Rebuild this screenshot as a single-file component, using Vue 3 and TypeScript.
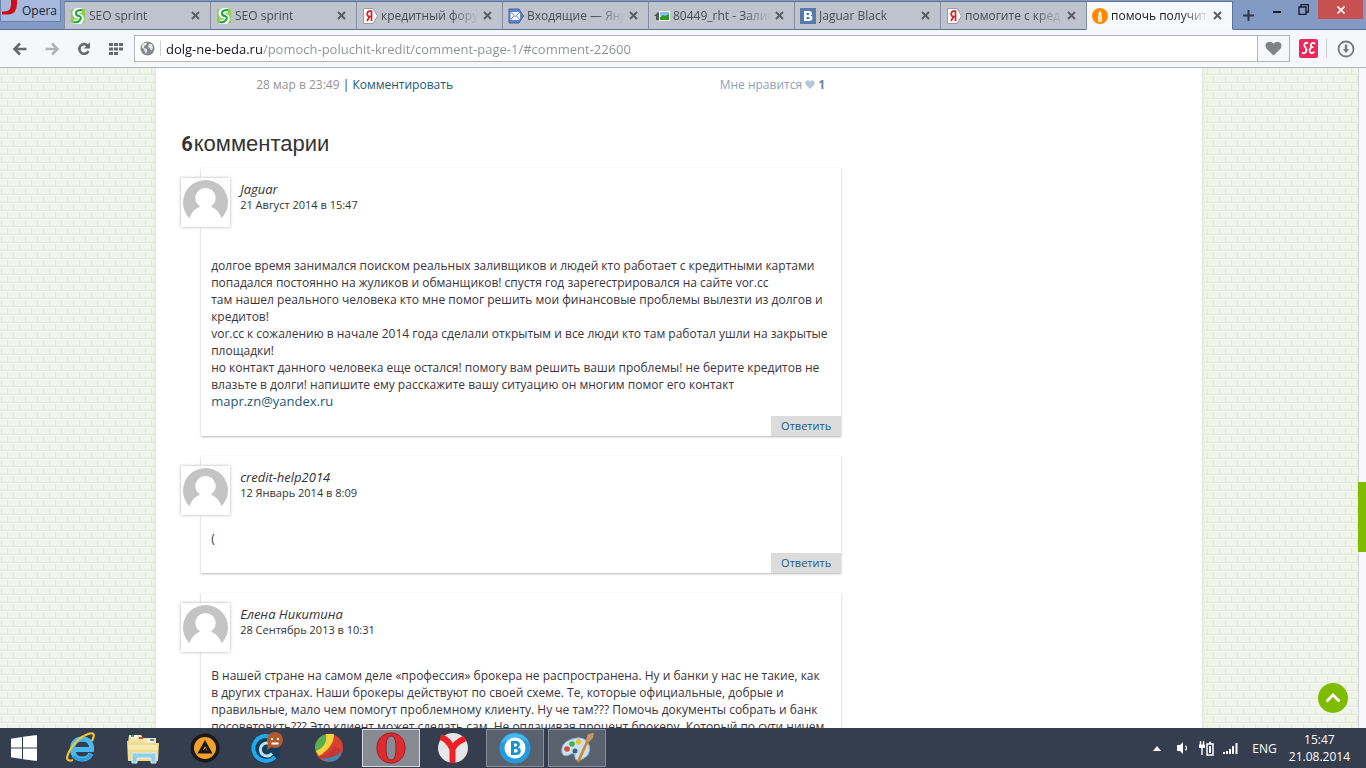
<script setup lang="ts">
import { ref } from 'vue'

type TabIcon = 'seo' | 'yandex' | 'mail' | 'pic' | 'vk' | 'flame'
interface Tab { icon: TabIcon; title: string }
interface Comment { author: string; date: string; spaced?: boolean; lines: string[]; email?: string }

const tabs: Tab[] = [
  { icon: 'seo', title: 'SEO sprint' },
  { icon: 'seo', title: 'SEO sprint' },
  { icon: 'yandex', title: 'кредитный фору' },
  { icon: 'mail', title: 'Входящие — Янд' },
  { icon: 'pic', title: '80449_rht - Залив' },
  { icon: 'vk', title: 'Jaguar Black' },
  { icon: 'yandex', title: 'помогите с кред' },
  { icon: 'flame', title: 'помочь получит' },
]
const activeTab = ref(7)
const address = ref('dolg-ne-beda.ru/pomoch-poluchit-kredit/comment-page-1/#comment-22600')

const comments: Comment[] = [
  {
    author: 'Jaguar',
    date: '21 Август 2014 в 15:47',
    spaced: true,
    lines: [
      'долгое время занимался поиском реальных заливщиков и людей кто работает с кредитными картами',
      'попадался постоянно на жуликов и обманщиков! спустя год зарегестрировался на сайте vor.cc',
      'там нашел реального человека кто мне помог решить мои финансовые проблемы вылезти из долгов и',
      'кредитов!',
      'vor.cc к сожалению в начале 2014 года сделали открытым и все люди кто там работал ушли на закрытые',
      'площадки!',
      'но контакт данного человека еще остался! помогу вам решить ваши проблемы! не берите кредитов не',
      'влазьте в долги! напишите ему расскажите вашу ситуацию он многим помог его контакт',
    ],
    email: 'mapr.zn@yandex.ru',
  },
  { author: 'credit-help2014', date: '12 Январь 2014 в 8:09', lines: ['('] },
  {
    author: 'Елена Никитина',
    date: '28 Сентябрь 2013 в 10:31',
    lines: [
      'В нашей стране на самом деле «профессия» брокера не распространена. Ну и банки у нас не такие, как',
      'в других странах. Наши брокеры действуют по своей схеме. Те, которые официальные, добрые и',
      'правильные, мало чем помогут проблемному клиенту. Ну че там??? Помочь документы собрать и банк',
      'посоветовкть??? Это клиент может сделать сам. Не оплачивая процент брокеру. Который по сути ничем',
    ],
  },
]
</script>

<template>
  <div class="screen">
    <header class="tabbar">
      <button class="menu" type="button">
        <svg width="18" height="16" viewBox="0 0 18 16" aria-hidden="true"><path d="M10 0h6v4q0 10-9 10.500H1v-3q9 1 9-7z" fill="#cc0f16" /></svg>
        Opera
      </button>
      <nav class="tabs">
        <div v-for="(tab, i) in tabs" :key="i" class="tab" :class="{ active: i === activeTab }">
          <button class="tab-main" type="button" @click="activeTab = i">
            <svg v-if="tab.icon === 'seo'" class="fav" viewBox="0 0 16 16" aria-hidden="true"><rect x="1" y="1" width="14" height="14" fill="#8fcf4f" /><path d="M12 2Q5 2 5 5t4 3q3 1 2 4t-7 2" stroke="#fff" stroke-width="5" fill="none" /><path d="M12 2Q6 2 6 5t3 3q3 1 1 4t-6 2" stroke="#18a048" stroke-width="2" fill="none" /></svg>
            <svg v-else-if="tab.icon === 'yandex'" class="fav" viewBox="0 0 16 16" aria-hidden="true"><path d="M1.500.500H11L15.500 8 11 15.500H1.500z" fill="#fff" stroke="#9a9ba3" /><path d="M9.500 13V3.200H7.800Q5.200 3.500 5.200 6t2.600 2.500h1.700M7.700 8.500 5 13" stroke="#d8212b" stroke-width="1.700" fill="none" /></svg>
            <svg v-else-if="tab.icon === 'mail'" class="fav" viewBox="0 0 16 16" aria-hidden="true"><path d="M1 1h10l4.500 7L11 15H1z" fill="#5f84c9" stroke="#46619f" /><path d="M2.500 4h9.500v8H2.500z" fill="#fff" /><path d="m2.500 4 4.700 4.500L12 4M2.500 12l3.300-4M12 12 8.500 8" stroke="#5f84c9" fill="none" /></svg>
            <svg v-else-if="tab.icon === 'pic'" class="fav" viewBox="0 0 16 16" aria-hidden="true"><path d="M0 8 4 4l3 3v5H2V8z" fill="#53575a" /><path d="M5 3h11v10H5z" fill="#f4f6f6" /><path d="M6 4h9v4H6z" fill="#89bfe8" /><path d="M6 12V9l3-2 2 1 4-2v6z" fill="#319a25" /></svg>
            <svg v-else-if="tab.icon === 'vk'" class="fav" viewBox="0 0 16 16" aria-hidden="true"><rect width="16" height="16" fill="#547cab" /><path fill-rule="evenodd" d="M4 3h5q3 0 3 2.500Q12 7 10.500 7.600 12.500 8 12.500 10 12.500 13 9 13H4zM6.500 5v2h1.700Q9.400 7 9.400 6T8.200 5zM6.500 9v2h2q1.300 0 1.300-1t-1.300-1z" fill="#fff" /></svg>
            <svg v-else class="fav" viewBox="0 0 16 16" aria-hidden="true"><circle cx="8" cy="8" r="8" fill="#ff8a00" /><path d="M8 2Q10 6 10 10l-.5 4h-3L6 10Q6 6 8 2z" fill="#fff" /><path d="M8 6v7" stroke="#ffb860" /></svg>
            <span class="tab-title">{{ tab.title }}</span>
          </button>
          <button class="close" type="button" aria-label="Закрыть вкладку"><svg width="9" height="9" viewBox="0 0 9 9" aria-hidden="true"><path d="m1 1 7 7M8 1 1 8" stroke="#5c5e64" stroke-width="2" /></svg></button>
        </div>
      </nav>
      <button class="newtab" type="button" aria-label="Новая вкладка"><svg width="11" height="11" viewBox="0 0 11 11" aria-hidden="true"><path d="M5.500 0v11M0 5.500h11" stroke="#2c3950" stroke-width="2" /></svg></button>
      <div class="winctl">
        <button type="button" aria-label="Свернуть"><svg width="10" height="10" viewBox="0 0 10 10" aria-hidden="true"><path d="M1 7h8" stroke="#1b1f28" stroke-width="2" /></svg></button>
        <button type="button" aria-label="Развернуть"><svg width="11" height="11" viewBox="0 0 11 11" aria-hidden="true"><path d="M3 2.500V.500h7.500V8h-2M1 3h7v7.500H1z" stroke="#1b1f28" stroke-width="1.400" fill="none" /></svg></button>
        <button class="quit" type="button" aria-label="Закрыть"><svg width="8" height="8" viewBox="0 0 8 8" aria-hidden="true"><path d="m.500.500 7 7M7.500.500l-7 7" stroke="#fff" stroke-width="1.600" /></svg></button>
      </div>
    </header>

    <div class="toolbar">
      <button class="tool" type="button" aria-label="Назад"><svg width="16" height="14" viewBox="0 0 16 14" aria-hidden="true"><path d="M8 1.500 2.500 7 8 12.500M3 7h11.500" stroke="#666a6e" stroke-width="2.600" fill="none" /></svg></button>
      <button class="tool" type="button" aria-label="Вперёд"><svg width="16" height="14" viewBox="0 0 16 14" aria-hidden="true"><path d="M8 1.500 13.500 7 8 12.500M13 7H1.500" stroke="#b0b2b5" stroke-width="2.600" fill="none" /></svg></button>
      <button class="tool" type="button" aria-label="Обновить"><svg width="14" height="14" viewBox="0 0 14 14" aria-hidden="true"><path d="M10.500 3.500A4.800 4.800 0 1 0 11.500 9" stroke="#666a6e" stroke-width="2.600" fill="none" /><path d="M13 0v6.500H6.800z" fill="#666a6e" /></svg></button>
      <button class="tool" type="button" aria-label="Экспресс-панель"><svg width="15" height="12" viewBox="0 0 15 12" aria-hidden="true"><path d="M0 1.500h15M0 6h15M0 10.500h10" stroke="#666a6e" stroke-width="3" stroke-dasharray="4 1" /></svg></button>
      <div class="addr">
        <svg class="globe" width="15" height="15" viewBox="0 0 15 15" aria-hidden="true"><circle cx="7.500" cy="7.500" r="7" fill="#85888c" /><path d="M2 4q2-3 5-2L6 4 4 5v2l3 1v2l-1 3Q4 10 4 8L2 7zM9 3l3 0 1 4-2 3-1-3-2-1z" fill="#e7e8ea" /></svg>
        <input v-model="address" class="url" type="text" aria-label="Адрес" spellcheck="false">
        <button class="heart" type="button" aria-label="В закладки"><svg width="17" height="15" viewBox="0 0 17 15" aria-hidden="true"><path d="M8.500 14.500 1.700 8Q-.500 5 1.200 2.300 4-1 8.500 2.500 13-1 15.800 2.300 17.500 5 15.300 8z" fill="#808285" /></svg></button>
      </div>
      <button class="ext" type="button" aria-label="SEO sprint"><svg width="19" height="19" viewBox="0 0 19 19" aria-hidden="true"><rect width="19" height="19" rx="2" fill="#e9285c" /><path d="M9 4.500Q7.500 3 5.800 4.500 4.500 6.500 6.500 8.500q2 2.500 0 5-2 1.500-3.500 0M16 5q-1.500-2-3.500-.5-1.500 2 0 3.700h2-2q-2.800 2-1.500 5 2 2 4.500-.5" stroke="#fff" stroke-width="1.700" fill="none" /></svg></button>
      <button class="dl" type="button" aria-label="Загрузки"><svg width="18" height="18" viewBox="0 0 18 18" aria-hidden="true"><circle cx="9" cy="9" r="7.500" stroke="#77797c" stroke-width="1.800" fill="none" /><path d="M9 4.500v6" stroke="#77797c" stroke-width="2.400" /><path d="M5.800 9h6.400L9 13z" fill="#77797c" /></svg></button>
    </div>

    <div class="view">
      <div class="bricks">
        <main class="page">
          <div class="meta">
            <p><span class="when">28 мар в 23:49</span> | <a href="#comment">Комментировать</a></p>
            <a class="like" href="#like">Мне нравится <svg width="10" height="9" viewBox="0 0 10 9" aria-hidden="true"><path d="M5 9 1 5Q-.500 3 1 1q2-1.700 4 .5 2-2.200 4-.5 1.500 2 0 4z" fill="#b5c8d8" /></svg> <b>1</b></a>
          </div>
          <h2><span class="count">6</span> комментарии</h2>
          <article v-for="c in comments" :key="c.author" class="card">
            <div class="head">
              <div class="avatar"><svg width="45" height="45" viewBox="0 0 45 45" aria-hidden="true"><circle cx="22.500" cy="22.500" r="22.500" fill="#c4c4c4" /><path d="M22.500 8a10 10 0 0 1 5.500 18.500Q36 30 39.500 40v5h-34v-5Q9 30 17 26.500A10 10 0 0 1 22.500 8z" fill="#fff" /></svg></div>
              <div>
                <cite>{{ c.author }}</cite>
                <time>{{ c.date }}</time>
              </div>
            </div>
            <p class="body" :class="{ spaced: c.spaced }">
              <template v-for="(line, i) in c.lines" :key="i"><br v-if="i > 0">{{ line }}</template>
              <template v-if="c.email"><br><a :href="'mailto:' + c.email">{{ c.email }}</a></template>
            </p>
            <a class="reply" href="#reply">Ответить</a>
          </article>
        </main>
      </div>
      <div class="scroll"><div class="thumb"></div></div>
      <button class="up" type="button" aria-label="Наверх"><svg width="16" height="10" viewBox="0 0 16 10" aria-hidden="true"><path d="m1.500 8.500 6.500-6.500 6.500 6.500" stroke="#fff" stroke-width="2.800" fill="none" /></svg></button>
    </div>

    <footer class="taskbar">
      <button class="start" type="button" aria-label="Пуск"><svg width="26" height="26" viewBox="0 0 26 26" aria-hidden="true"><path d="M0 3.800 11 2v10.500H0zM12 1.800 26 0v12.500H12zM0 13.500h11V24L0 22.200zM12 13.500h14V26l-14-1.800z" fill="#fff" /></svg></button>
      <button class="app" type="button" aria-label="Internet Explorer">
        <svg width="32" height="32" viewBox="0 0 32 32" aria-hidden="true"><path d="M8 17.500h18.500Q27 7 17 7 8 7.500 7.500 17q.5 10 10 10 6 0 8.500-5.500" stroke="#4cb9ee" stroke-width="5" fill="none" /><path d="M9 24q3 4 9 3.500 6-.5 8-6" stroke="#2c9fe0" stroke-width="3" fill="none" /><path d="M27 9Q32-1 23 2 12 6 5 18-2 31 8 28" stroke="#f4c531" stroke-width="2.200" fill="none" /></svg>
      </button>
      <button class="app" type="button" aria-label="Проводник">
        <svg width="34" height="32" viewBox="0 0 34 32" aria-hidden="true"><path d="M3 3h12l2 3h13v6H2z" fill="#f5e6ad" /><path d="M5 3h6v3H5zM22 7h6v3h-6z" fill="#fff" /><path d="M5 3h3v2H5z" fill="#28a838" /><path d="M13 5h4v2h-4z" fill="#d6452b" /><path d="M24 7h4v2h-4z" fill="#3e92ce" /><path d="M1 9h10l2 2h20l-1 18H2z" fill="#efdc8d" /><path d="M2 13h30v5H2z" fill="#f7e9ad" /><path d="M6 31V21h24v10h-5v-5H11v5z" fill="#90cde9" stroke="#d8f2fc" /></svg>
      </button>
      <button class="app" type="button" aria-label="AIMP">
        <svg width="30" height="30" viewBox="0 0 30 30" aria-hidden="true"><circle cx="15" cy="15" r="14.500" fill="#17191c" /><circle cx="15" cy="15" r="11" fill="#f6a12a" /><path d="m15 10 5 9H10z" stroke="#191a1c" stroke-width="3" fill="#e8992a" /><path d="m10 19 6-4 1 4z" fill="#191a1c" /></svg>
      </button>
      <button class="app" type="button" aria-label="Комета">
        <svg width="32" height="32" viewBox="0 0 32 32" aria-hidden="true"><circle cx="15" cy="17" r="14.500" fill="#143c5b" /><path d="M24 25A12.500 12.500 0 1 1 20 5" stroke="#20a9ed" stroke-width="4" fill="none" /><path d="M21 21.500a6.500 6.500 0 1 1-1-9" stroke="#b7e4fa" stroke-width="3" fill="none" /><circle cx="24" cy="8" r="8" fill="#b45a2c" /><path d="m17 11-1 7 6-4z" fill="#b45a2c" /><path d="M20 7h2M26 7h2M20.500 11.500h7" stroke="#fff" stroke-width="2" /></svg>
      </button>
      <button class="app" type="button" aria-label="Шар">
        <svg width="30" height="30" viewBox="0 0 30 30" aria-hidden="true"><circle cx="15" cy="15" r="14" fill="#d94134" /><path d="M15 1A14 14 0 0 0 1 15l3 8q7-8 13-12z" fill="#58ad4f" /><path d="M12 1h8q0 13-15 22l-3-5Q14 13 12 1z" fill="#f5d33d" /><path d="m29 15-5 11q-8 5-17 0 15 0 22-11z" fill="#318fb8" /><path d="M5 23q10 0 15-10l8 4Q20 27 7 25z" fill="#c93735" /></svg>
      </button>
      <button class="app current" type="button" aria-label="Opera">
        <svg width="30" height="32" viewBox="0 0 30 32" aria-hidden="true"><path fill-rule="evenodd" d="M15 1C24 1 29 8 29 16s-5 15-14 15S1 24 1 16 6 1 15 1zm0 3c-4 0-5 5-5 12s1 12 5 12 5-5 5-12S19 4 15 4z" fill="#de2b2f" stroke="#9d1a20" /></svg>
      </button>
      <button class="app" type="button" aria-label="Яндекс Браузер">
        <svg width="32" height="32" viewBox="0 0 32 32" aria-hidden="true"><circle cx="16" cy="16" r="15" fill="#e5e6e7" /><path d="M3.500 5Q11 7 15.500 17M28 6.500Q19 10 15.500 17v14" stroke="#ee2025" stroke-width="6" fill="none" /></svg>
      </button>
      <button class="app open" type="button" aria-label="ВКонтакте">
        <svg width="32" height="32" viewBox="0 0 32 32" aria-hidden="true"><circle cx="16" cy="16" r="15.500" fill="#249bdc" /><path d="M2 11a15 15 0 0 1 28 0q-8-7-18-4-6 2-10 4z" fill="#49b8ee" /><circle cx="16" cy="16" r="10.500" fill="#fff" /><path fill-rule="evenodd" d="M12 9h5q4 0 4 3.500 0 2-2 3 2.800.8 2.800 3.500 0 4-4.800 4h-5zm3 2.500v3h1.500q1.700 0 1.700-1.500t-1.700-1.500zm0 5.500v3.500h2q1.800 0 1.800-1.700T17 17z" fill="#1993cf" /></svg>
      </button>
      <button class="app open" type="button" aria-label="Paint">
        <svg width="34" height="32" viewBox="0 0 34 32" aria-hidden="true"><path d="M2 21Q0 11 12 7q13-4 17 6 3 11-9 15-5 1-5-3 0-5-4-3-7 4-9-1z" fill="#c9e2f1" stroke="#8eb4ce" /><circle cx="7" cy="17" r="2.800" fill="#d8483e" /><circle cx="12" cy="12" r="2.800" fill="#4bac46" /><circle cx="18.500" cy="10" r="2.800" fill="#edc33c" /><circle cx="15" cy="19" r="2.500" fill="#40627f" /><path d="m18 30 10-22" stroke="#d6852e" stroke-width="2.800" /><path d="m26 8 2-6 6-1-1 5-4 4z" fill="#c99561" /></svg>
      </button>
      <div class="tray">
        <svg class="more" width="8" height="5" viewBox="0 0 8 5" aria-hidden="true"><path d="m4 0 4 5H0z" fill="#fff" /></svg>
        <svg width="14" height="14" viewBox="0 0 14 14" aria-hidden="true"><path d="M1 4h3l3-3v12l-3-3H1z" fill="#fff" /><path d="M9.500 4.500q2 2.500 0 5" stroke="#fff" stroke-width="1.200" fill="none" /></svg>
        <svg width="15" height="15" viewBox="0 0 15 15" aria-hidden="true"><path d="M1.500 0v4M4.500 0v4M3 7v7" stroke="#fff" stroke-width="1.400" /><path d="M0 3.500h6V7H0z" fill="#fff" /><path d="M8 3h6v11H8zM10 1.500h2" stroke="#fff" stroke-width="1.500" fill="none" /><path d="M10 5h2v7h-2z" fill="#fff" /></svg>
        <svg width="15" height="12" viewBox="0 0 15 12" aria-hidden="true"><path d="M1 12v-2M4 12V9M7 12V7M10 12V4M13.500 12V1" stroke="#fff" stroke-width="2" /></svg>
        <span class="lang">ENG</span>
        <time class="clock">15:47<br>21.08.2014</time>
      </div>
    </footer>
  </div>
</template>

<style>
body { margin: 0; }
</style>

<style scoped>
.screen { display: flex; flex-direction: column; height: 100vh; overflow: hidden; font-family: "Open Sans", "Noto Sans", sans-serif; font-size: 12px; color: #333; }
button { border: 0; padding: 0; background: none; font: inherit; color: inherit; display: flex; align-items: center; justify-content: center; }
svg { flex: none; }
a { color: #21587a; text-decoration: none; }

.tabbar { display: flex; align-items: flex-start; height: 30px; background: #839ac4; box-sizing: border-box; border-bottom: 1px solid #5a7199; flex: none; }
.menu { width: 61px; height: 22px; gap: 3px; justify-content: flex-start; align-items: center; background: #a6b8de; border: 1px solid #6880ad; border-top: 0; box-sizing: border-box; margin-right: 3px; color: #20242c; }
.menu svg { align-self: flex-start; }
.tabs { display: flex; flex: 0 1 1169px; min-width: 0; height: 30px; padding-top: 1px; box-sizing: border-box; }
.tab { flex: 1 1 0; min-width: 0; display: flex; align-items: center; background: #bfc3ce; border-left: 1px solid #858d9f; border-top: 1px solid #5a7199; border-bottom: 1px solid #5a7199; box-sizing: border-box; padding: 0 7px 0 5px; color: #4a4c52; }
.tab.active { background: #f6f8fb; border-bottom-color: #f6f8fb; border-right: 1px solid #5a7199; color: #17191d; }
.tab-main { flex: 1; min-width: 0; gap: 3px; justify-content: flex-start; height: 100%; }
.fav { width: 16px; height: 16px; }
.tab-title { flex: 1; min-width: 0; white-space: nowrap; text-align: left; mask-image: linear-gradient(to right, #000 70px, transparent 98px); }
.close { width: 15px; height: 16px; }
.newtab { width: 30px; height: 30px; }
.winctl { display: flex; margin-left: auto; margin-right: 3px; }
.winctl button { width: 26px; height: 19px; }
.winctl .quit { width: 45px; margin-left: 2px; background: #c75050; }

.toolbar { display: flex; align-items: center; height: 38px; box-sizing: border-box; border-bottom: 1px solid #b4b7ba; background: #f6f7fb; padding: 0 11px 0 4px; flex: none; }
.tool { width: 32px; height: 28px; }
.addr { flex: 1; display: flex; align-items: center; height: 27px; margin-left: 2px; box-sizing: border-box; border: 1px solid #b4b4b6; background: #fff; padding-left: 5px; min-width: 0; }
.globe { padding-right: 5px; border-right: 1px solid #cfcfd1; }
.url { flex: 1; min-width: 0; border: 0; outline: 0; padding: 0; margin-left: 5px; font: 13px/20px "Open Sans", "Noto Sans", sans-serif; color: transparent; background: linear-gradient(to right, #15121f 97px, #8c8f93 97px); background-clip: text; -webkit-background-clip: text; caret-color: #222; }
.heart { width: 32px; align-self: stretch; border-left: 1px solid #b4b4b6; background: #f6f7fb; }
.ext { width: 37px; height: 19px; border-right: 1px solid #c9cbce; }
.dl { width: 18px; height: 18px; margin-left: 10px; }

.view { flex: 1; min-height: 0; display: flex; position: relative; overflow: hidden; }
.bricks {
  flex: 1;
  overflow: hidden;
  background-color: #f0f5ea;
  background-image:
    linear-gradient(#e2e8dc 1px, #fafcf6 1px, #fafcf6 2px, transparent 2px),
    conic-gradient(from 90deg at 1px 8px, transparent 50%, #e2e8dc 50%, #e2e8dc 75%, transparent 75%),
    conic-gradient(from 90deg at 1px 8px, transparent 50%, #e2e8dc 50%, #e2e8dc 75%, transparent 75%);
  background-size: 12px 8px, 12px 16px, 12px 16px;
  background-position: 0 6px, 7px 14px, 1px 6px;
}
.page { box-sizing: border-box; width: 77%; min-width: 760px; margin: 0 auto; min-height: 100%; background: #fff; padding: 8px 25px 0; box-shadow: 0 0 4px #d3d8cf; }
.meta { display: flex; justify-content: space-between; max-width: 569px; margin-left: 75px; line-height: 18px; }
.meta p { margin: 0; }
.when { color: #939393; }
.like { color: #8ba3b9; }
.like b { color: #6487a8; }
h2 { margin: 36px 0 10px; font: 22px/28px "Liberation Sans", sans-serif; color: #333; display: flex; align-items: baseline; gap: 1px; }
.count { font-family: Roboto, sans-serif; font-size: 20px; font-weight: 700; }
.card { max-width: 640px; margin: 0 0 20px 20px; background: #fff; box-shadow: 0 1px 2px #b5b5b5; display: flex; flex-direction: column; }
.head { display: flex; gap: 10px; height: 74px; padding-top: 10px; box-sizing: border-box; margin-left: -20px; }
.avatar { width: 49px; height: 49px; flex: none; display: flex; align-items: center; justify-content: center; background: #fff; box-shadow: 0 0 3px #b0b0b0; }
cite { display: block; font-size: 13px; line-height: 18px; padding-top: 2px; }
.head time { display: block; font-size: 11px; line-height: 14px; }
.body { margin: 0 0 6px; padding: 0 10px; font-size: 12px; line-height: 17px; color: #3a353e; white-space: nowrap; }
.body a { font-size: 13px; line-height: 16px; }
.body.spaced { padding-top: 15px; }
.reply { align-self: flex-end; background: #dcdcdc; font-size: 11px; line-height: 20px; padding: 0 10px; }
.scroll { width: 8px; box-sizing: border-box; background: #f8f8fa; border-left: 1px solid #d4d6d8; display: flex; flex-direction: column; flex: none; }
.thumb { height: 70px; margin: 414px 0 0 -1px; background: #7fbb00; }
.up { position: absolute; right: 18px; bottom: 15px; width: 30px; height: 30px; border-radius: 50%; background: #7fbb00; }

.taskbar { height: 40px; flex: none; display: flex; align-items: center; gap: 4px; background: #353e4f; color: #fff; }
.start { width: 48px; height: 40px; }
.app { width: 58px; height: 38px; box-sizing: border-box; }
.app.current { background: #868b94; border: 1px solid #d6d8dc; }
.app.open { background: #59606e; border: 1px solid #888e99; }
.tray { margin-left: auto; display: flex; align-items: center; gap: 9px; padding-right: 16px; }
.more { margin-right: 6px; }
.lang { margin-left: 5px; }
.clock { text-align: center; line-height: 17px; margin-left: 3px; }
</style>
